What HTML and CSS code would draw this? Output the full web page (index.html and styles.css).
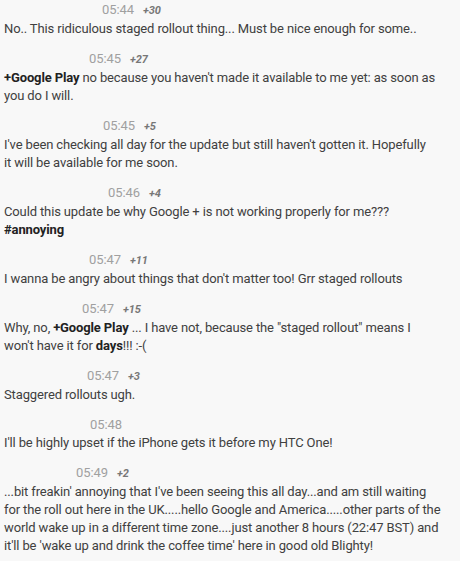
FILE: index.html
```html
<!DOCTYPE html>
<html>
<head>
    <title>Comments</title>
    <link rel="stylesheet" href="styles.css">
</head>
<body>
    <div class="comments">
        <div class="comment">
            <div class="head"><span class="author" style="width:98px"></span><span class="time">05:44</span><span class="plus">+30</span></div>
            <div class="text">No.. This ridiculous staged rollout thing... Must be nice enough for some..</div>
        </div>
        <div class="comment">
            <div class="head"><span class="author" style="width:85px"></span><span class="time">05:45</span><span class="plus">+27</span></div>
            <div class="text"><b>+Google Play</b> no because you haven't made it available to me yet: as soon as you do I will.</div>
        </div>
        <div class="comment">
            <div class="head"><span class="author" style="width:99px"></span><span class="time">05:45</span><span class="plus">+5</span></div>
            <div class="text">I've been checking all day for the update but still haven't gotten it. Hopefully it&nbsp;will be available for me soon.</div>
        </div>
        <div class="comment">
            <div class="head"><span class="author" style="width:104px"></span><span class="time">05:46</span><span class="plus">+4</span></div>
            <div class="text">Could this update be why Google + is not working properly for me??? <b>#annoying</b></div>
        </div>
        <div class="comment">
            <div class="head"><span class="author" style="width:85px"></span><span class="time">05:47</span><span class="plus">+11</span></div>
            <div class="text">I wanna be angry about things that don't matter too! Grr staged rollouts</div>
        </div>
        <div class="comment">
            <div class="head"><span class="author" style="width:78px"></span><span class="time">05:47</span><span class="plus">+15</span></div>
            <div class="text">Why, no, <b>+Google Play</b> ... I have not, because the "staged rollout" means I won't have it for <b>days</b>!!! :-(</div>
        </div>
        <div class="comment">
            <div class="head"><span class="author" style="width:83px"></span><span class="time">05:47</span><span class="plus">+3</span></div>
            <div class="text">Staggered rollouts ugh.</div>
        </div>
        <div class="comment">
            <div class="head"><span class="author" style="width:86px"></span><span class="time">05:48</span></div>
            <div class="text">I'll be highly upset if the iPhone gets it before my HTC One!</div>
        </div>
        <div class="comment">
            <div class="head"><span class="author" style="width:72px"></span><span class="time">05:49</span><span class="plus">+2</span></div>
            <div class="text">...bit freakin' annoying that I've been seeing this all day...and am still waiting for the roll out here in the UK.....hello Google and America.....other parts of the world wake up in a different time zone....just another 8 hours (22:47 BST) and it'll be 'wake up and drink the coffee time' here in good old Blighty!</div>
        </div>
    </div>
</body>
</html>
```

FILE: styles.css
```css
body {
    margin: 0;
    padding: 0;
    background-color: #f8f8f8;
    font-family: Roboto, "Liberation Sans", Arial, sans-serif;
    font-size: 13px;
    color: #404040;
}

.comments {
    padding: 1px 19px 0 4px;
}

.comment {
    margin-bottom: 12px;
}

.head {
    display: flex;
    align-items: baseline;
    line-height: 18px;
}

.author {
    display: inline-block;
}

.time {
    color: #a0a0a0;
    letter-spacing: -0.1px;
}

.plus {
    margin-left: 9px;
    font-size: 11px;
    font-style: italic;
    font-weight: bold;
    color: #777;
}

.text {
    line-height: 18px;
    letter-spacing: -0.13px;
}

.text b {
    color: #222;
}
```
